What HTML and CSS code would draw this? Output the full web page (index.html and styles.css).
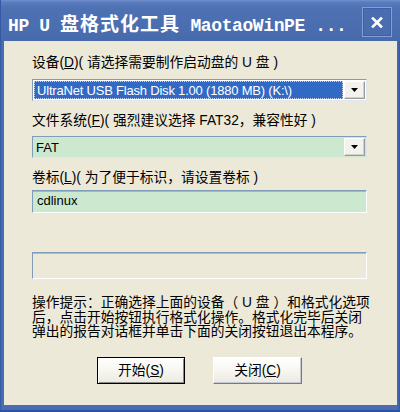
FILE: index.html
```html
<!DOCTYPE html>
<html>
<head>
<meta charset="utf-8">
<link rel="stylesheet" href="styles.css">
</head>
<body>
<div class="window">
  <div class="titlebar">
    <div class="title"><span class="lat">HP U </span><span class="cjk">盘格式化工具</span><span class="lat"> MaotaoWinPE ...</span></div>
    <div class="close">
      <svg width="12" height="11" viewBox="0 0 12 11"><path d="M2 1.5 L10 9.5 M10 1.5 L2 9.5" stroke="#fff" stroke-width="2.6" stroke-linecap="square"/></svg>
    </div>
  </div>
  <div class="client">
    <div class="label l1">设备(<u>D</u>)( 请选择需要制作启动盘的 U 盘 )</div>
    <div class="combo c1">
      <div class="field sel"><span class="focus">UltraNet USB Flash Disk 1.00 (1880 MB) (K:\)</span></div>
      <div class="drop"><svg width="7" height="4" viewBox="0 0 7 4"><path d="M0 0 H7 L3.5 4 Z" fill="#000"/></svg></div>
    </div>
    <div class="label l2">文件系统(<u>F</u>)( 强烈建议选择 FAT32，兼容性好 )</div>
    <div class="combo c2">
      <div class="field green"><span class="val">FAT</span></div>
      <div class="drop"><svg width="7" height="4" viewBox="0 0 7 4"><path d="M0 0 H7 L3.5 4 Z" fill="#000"/></svg></div>
    </div>
    <div class="label l3">卷标(<u>L</u>)( 为了便于标识，请设置卷标 )</div>
    <div class="textbox">cdlinux</div>
    <div class="progress"></div>
    <div class="hint">操作提示：正确选择上面的设备（ U 盘 ）和格式化选项<br>后，点击开始按钮执行格式化操作。格式化完毕后关闭<br>弹出的报告对话框并单击下面的关闭按钮退出本程序。</div>
    <div class="buttons">
      <div class="btn default">开始(<u>S</u>)</div>
      <div class="btn">关闭(<u>C</u>)</div>
    </div>
  </div>
</div>
</body>
</html>
```

FILE: styles.css
```css
* { box-sizing: border-box; }
html, body { margin: 0; padding: 0; }
body { width: 400px; height: 412px; overflow: hidden; background: #ece9d8; }

.window {
  width: 400px;
  height: 412px;
  display: flex;
  flex-direction: column;
  background: linear-gradient(to right, #3358a4 0, #4a6db2 2px, #4a6db2 397px, #3358a4 400px);
  padding: 0 3px 7px 4px;
  box-shadow: inset 0 -2px 0 #2f52a0;
}

.titlebar {
  height: 41px;
  margin: 0 -3px 0 -4px;
  flex: none;
  display: flex;
  align-items: flex-start;
  justify-content: space-between;
  padding: 7px 8px 0 8px;
  background: linear-gradient(to bottom, #7291cd 0, #5b7dc0 2px, #4e71b3 8px, #4a6db0 30px, #476aad 41px);
  box-shadow: inset 1px 0 0 #3358a4;
}

.title {
  color: #fff;
  font-weight: bold;
  white-space: nowrap;
  padding-top: 7px;
  line-height: 18px;
}
.title .lat {
  font-family: "Liberation Mono", monospace;
  font-size: 18px;
  letter-spacing: -0.4px;
  white-space: pre;
}
.title .cjk {
  font-family: "Noto Sans CJK SC", sans-serif;
  font-size: 19px;
  letter-spacing: 1px;
}

.close {
  width: 30px;
  height: 30px;
  border: 1px solid #839fd6;
  box-shadow: inset 0 0 0 1px #3d5fa5;
  background: #4a6db0;
  display: flex;
  align-items: center;
  justify-content: center;
}

.client {
  flex: 1;
  background: #ece9d8;
  padding: 0 30px 0 28px;
  display: flex;
  flex-direction: column;
  font-family: "Liberation Sans", "Noto Sans CJK SC", sans-serif;
  font-size: 13.75px;
  color: #000;
}

.label {
  height: 17px;
  line-height: 17px;
  white-space: nowrap;
}
.l1 { margin-top: 13px; }
.l2 { margin-top: 11px; }
.l3 { margin-top: 11px; }

.combo {
  height: 22px;
  display: flex;
  border: 1px solid;
  border-color: #7f9db9 #dfe6ef #dfe6ef #7f9db9;
  background: #fff;
  padding: 1px;
}
.c1 { margin-top: 8px; }
.c2 { margin-top: 7px; background: #cce8cf; }

.field {
  flex: 1;
  display: flex;
  align-items: center;
  font-size: 13px;
  white-space: nowrap;
  overflow: hidden;
}
.field.sel {
  background: #316ac5;
  color: #fff;
  padding: 0;
  letter-spacing: -0.2px;
}
.focus {
  flex: 1;
  height: 100%;
  display: flex;
  align-items: center;
  padding-left: 3px;
  outline: 1px dotted #c9d6ee;
  outline-offset: -1px;
}
.field.green { background: #cce8cf; }
.val { padding-left: 2px; }

.drop {
  width: 21px;
  margin-left: 1px;
  background: #f3f2ec;
  border: 1px solid;
  border-color: #fff #9a9a96 #9a9a96 #fff;
  box-shadow: inset -1px -1px 0 #d4d0c8;
  display: flex;
  align-items: center;
  justify-content: center;
}

.textbox {
  margin-top: 4px;
  height: 23px;
  background: #cce8cf;
  border: 1px solid;
  border-color: #7f9db9 #fff #fff #7f9db9;
  box-shadow: inset 0 1px 0 #9fb5d0;
  font-size: 13px;
  line-height: 20px;
  padding-left: 4px;
}

.progress {
  margin-top: 39px;
  height: 27px;
  border: 1px solid;
  border-color: #7f9db9 #fff #fff #7f9db9;
  box-shadow: inset 0 1px 0 #a9bcd6;
}

.hint {
  margin-top: 17px;
  line-height: 14.7px;
  white-space: nowrap;
}

.buttons {
  margin-top: 17px;
  display: flex;
  justify-content: center;
  gap: 28px;
}
.btn {
  width: 89px;
  height: 27px;
  display: flex;
  align-items: center;
  justify-content: center;
  background: linear-gradient(to bottom, #ffffff 0, #f7f6f1 50%, #ece9df 100%);
  border: 1px solid;
  border-color: #fff #7a7a78 #7a7a78 #fff;
  box-shadow: inset -1px -1px 0 #c4c8d4;
  font-size: 13.75px;
  line-height: 17px;
  white-space: nowrap;
}
.btn.default {
  width: 88px;
  border: 1px solid #000;
  box-shadow: inset 1px 1px 0 #fff, inset -1px -1px 0 #8a8a88;
}
```
